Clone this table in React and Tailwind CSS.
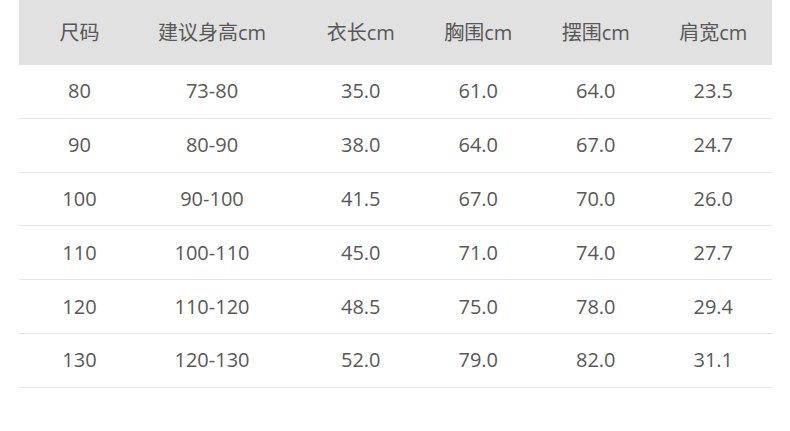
import React from "react";

const headers = ["尺码", "建议身高cm", "衣长cm", "胸围cm", "摆围cm", "肩宽cm"];
const rows = [
  ["80", "73-80", "35.0", "61.0", "64.0", "23.5"],
  ["90", "80-90", "38.0", "64.0", "67.0", "24.7"],
  ["100", "90-100", "41.5", "67.0", "70.0", "26.0"],
  ["110", "100-110", "45.0", "71.0", "74.0", "27.7"],
  ["120", "110-120", "48.5", "75.0", "78.0", "29.4"],
  ["130", "120-130", "52.0", "79.0", "82.0", "31.1"],
];

function Cell({ i, children }) {
  return (
    <div className={i === 1 ? "flex items-center justify-center pr-[18px]" : "flex items-center justify-center"}>
      {children}
    </div>
  );
}

export default function App() {
  return (
    <div
      className="w-[790px] h-[431px] bg-white text-[#585858]"
      style={{ fontFamily: '"Open Sans", "Noto Sans CJK SC", sans-serif' }}
    >
      <div className="ml-[19px] w-[753px]">
        <div className="grid grid-cols-[121px_162px_repeat(4,1fr)] h-[65px] bg-[#e1e1e1] text-[20px]">
          {headers.map((h, i) => (
            <Cell key={i} i={i}>{h}</Cell>
          ))}
        </div>
        {rows.map((r, ri) => (
          <div
            key={ri}
            className="grid grid-cols-[121px_162px_repeat(4,1fr)] h-[53.8px] border-b border-[#e6e6e6] text-[20px]"
          >
            {r.map((c, i) => (
              <Cell key={i} i={i}>{c}</Cell>
            ))}
          </div>
        ))}
      </div>
    </div>
  );
}
